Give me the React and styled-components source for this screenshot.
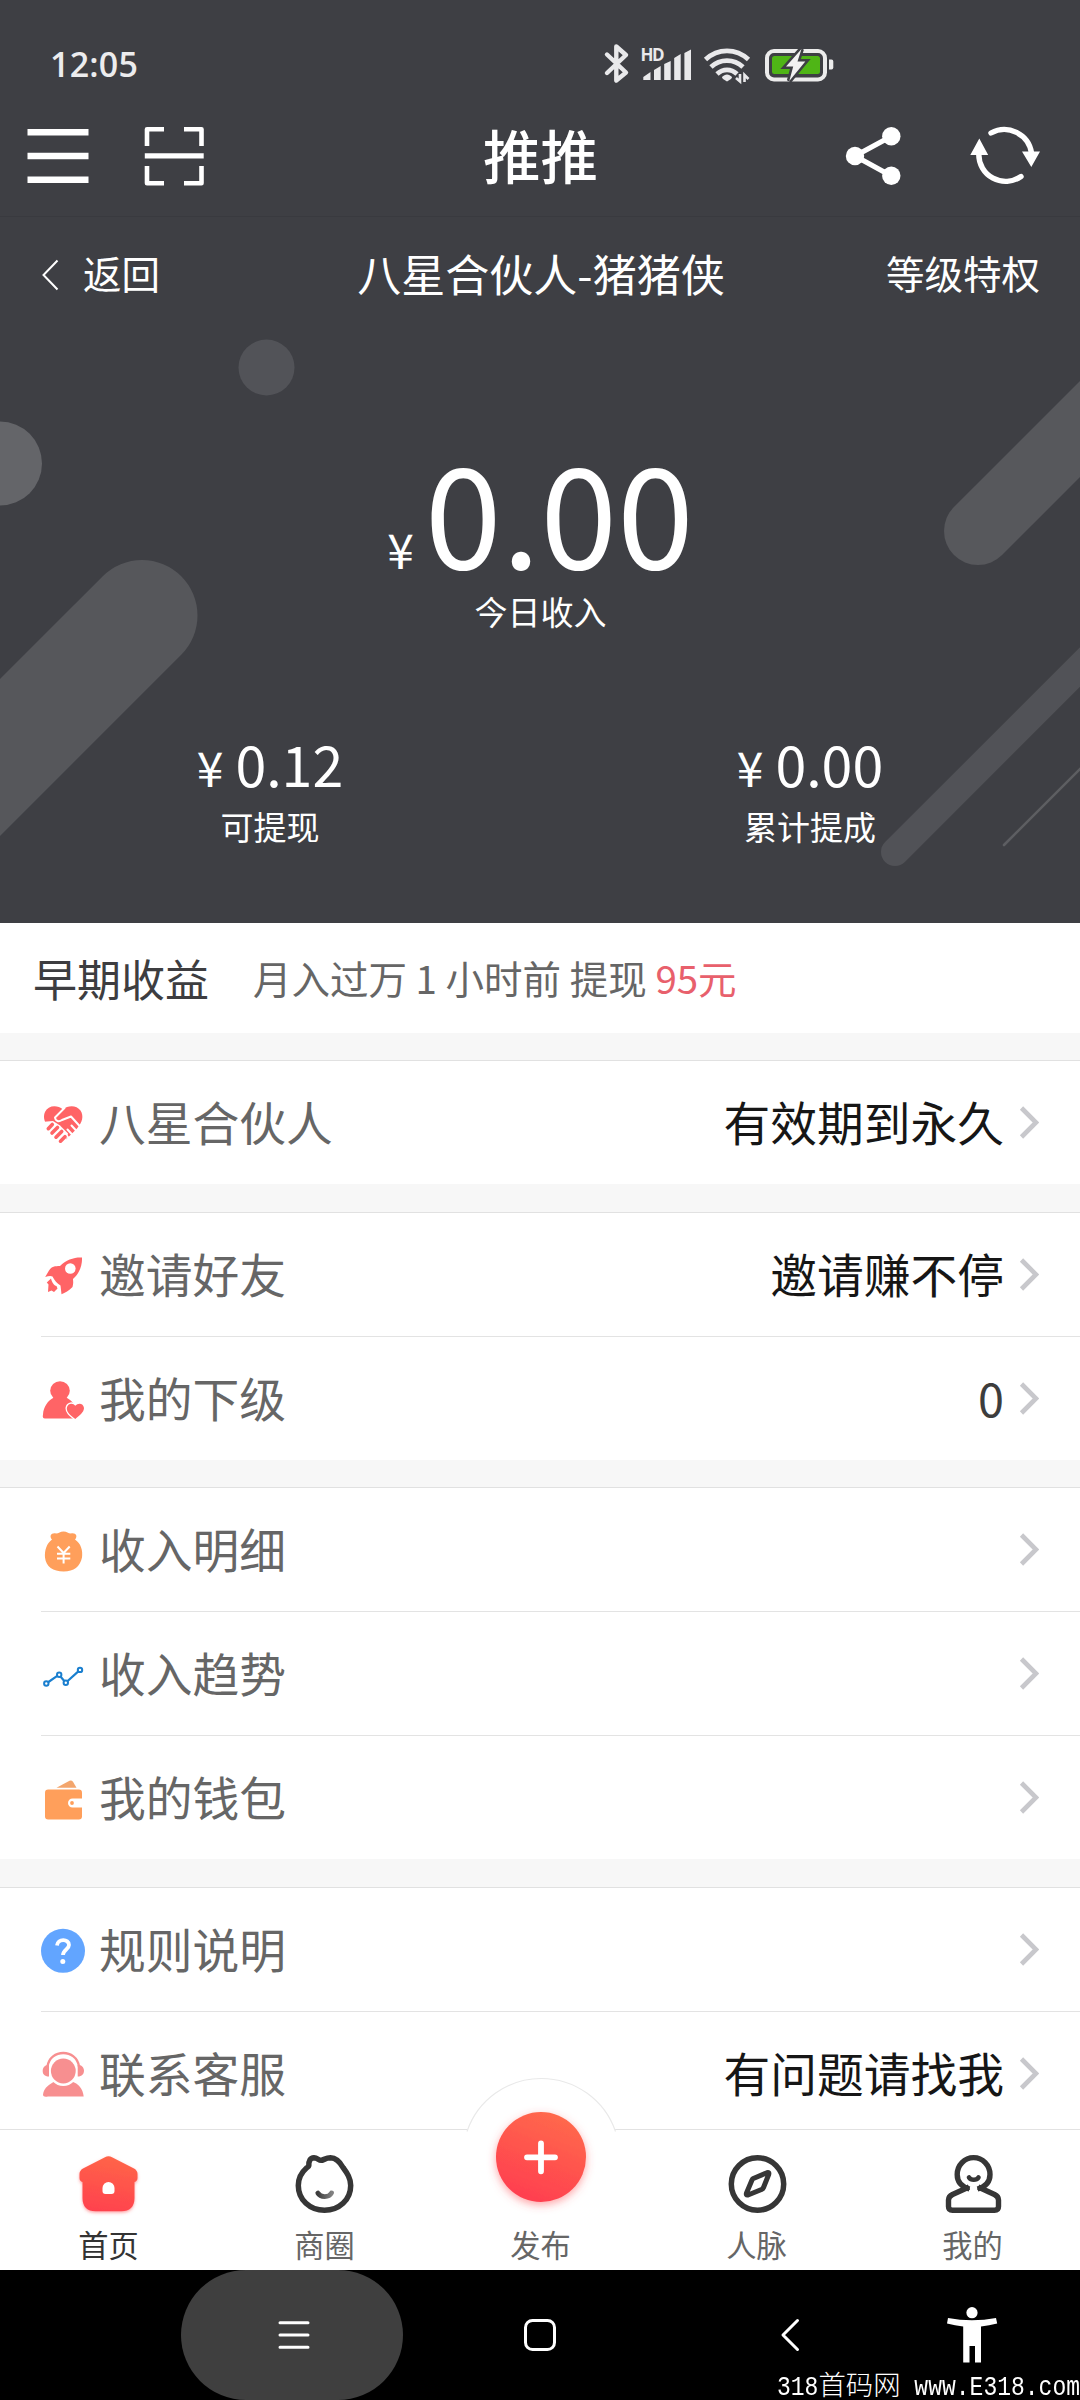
import React from "react";
import styled, { createGlobalStyle } from "styled-components";

const GlobalStyle = createGlobalStyle`
  * { box-sizing: border-box; }
  html, body { margin: 0; padding: 0; background: #fff; }
  body { font-family: "Noto Sans CJK SC", "Noto Sans", sans-serif; }
`;

const Screen = styled.div`
  width: 1080px;
  height: 2400px;
  display: flex;
  flex-direction: column;
  overflow: hidden;
  background: #f7f7f7;
`;

/* ---------- dark top area ---------- */

const Hero = styled.header`
  position: relative;
  height: 923px;
  flex: none;
  display: flex;
  flex-direction: column;
  background: #3e3f44;
  color: #fff;
`;

const HeroShapes = styled.svg`
  position: absolute;
  inset: 0;
  width: 1080px;
  height: 923px;
`;

const StatusBar = styled.div`
  position: relative;
  height: 96px;
  display: flex;
  align-items: flex-start;
  padding: 40px 0 0 50px;
`;

const Clock = styled.span`
  width: 550px;
  font: 600 34px/48px "Open Sans", sans-serif;
  letter-spacing: 0.2px;
  color: #ececee;
`;

const Glyph = styled.svg`
  display: block;
  flex: none;
`;

const AppBar = styled.div`
  position: relative;
  height: 121px;
  display: grid;
  grid-template-columns: 1fr auto 1fr;
  align-items: center;
  padding: 0 34px 0 22px;
  border-bottom: 1px solid #393a3f;
`;

const BarActions = styled.div`
  display: flex;
  justify-content: ${(p) => (p.$end ? "flex-end" : "flex-start")};
  gap: ${(p) => p.$gap}px;
`;

const AppTitle = styled.h1`
  margin: 0 0 4px 13px;
  font-size: 57.5px;
  line-height: 80px;
  font-weight: 500;
`;

const SubBar = styled.div`
  position: relative;
  height: 116px;
  display: grid;
  grid-template-columns: 1fr auto 1fr;
  align-items: center;
  padding: 0 40px 6px 38px;
`;

const BackLink = styled.div`
  display: flex;
  align-items: center;
  gap: 19px;
  font-size: 38.5px;
  line-height: 56px;
  & > svg { margin-top: 5px; }
`;

const SubTitle = styled.h2`
  margin: 1px 0 0 4px;
  font-size: 44px;
  line-height: 64px;
  font-weight: 400;
`;

const Privilege = styled.div`
  text-align: right;
  font-size: 38.5px;
  line-height: 56px;
`;

const MainIncome = styled.div`
  position: relative;
  margin-top: 107px;
  padding-left: 1px;
  display: flex;
  flex-direction: column;
  align-items: center;
`;

const Amount = styled.div`
  display: flex;
  align-items: baseline;
  gap: ${(p) => (p.$large ? 11 : 12)}px;
  font-size: ${(p) => (p.$large ? 138.5 : 55.5)}px;
  line-height: ${(p) => (p.$large ? 138 : 60)}px;
`;

const Currency = styled.span`
  font-size: 48px;
  line-height: 48px;
`;

const Caption = styled.div`
  margin-top: 9px;
  font-size: 33px;
  line-height: 48px;
`;

const Balances = styled.div`
  position: relative;
  margin-top: 98px;
  display: grid;
  grid-template-columns: 1fr 1fr;
`;

const Balance = styled.div`
  display: flex;
  flex-direction: column;
  align-items: center;
`;

/* ---------- list ---------- */

const Content = styled.main`
  height: 1206px;
  flex: none;
  overflow: hidden;
`;

const Notice = styled.section`
  height: 110px;
  display: flex;
  align-items: center;
  gap: 44px;
  padding: 0 33px 1px;
  background: #fff;
`;

const NoticeTitle = styled.strong`
  font-size: 44px;
  line-height: 64px;
  font-weight: 400;
  color: #3d3d40;
`;

const NoticeText = styled.span`
  font-size: 38.5px;
  line-height: 56px;
  margin-bottom: 2px;
  color: #666;
`;

const Highlight = styled.em`
  font-style: normal;
  color: #e8606c;
`;

const Group = styled.section`
  margin-top: ${(p) => p.$gap}px;
  border-top: 1px solid #e1e1e1;
  background: #fff;
`;

const Row = styled.div`
  height: 123px;
  display: flex;
  align-items: center;
  padding: 0 41px 0 41px;
  & + & {
    height: 124px;
    background: linear-gradient(#e3e3e3, #e3e3e3) no-repeat 41px 0 / 100% 1px;
    padding-top: 1px;
  }
`;

const RowLabel = styled.span`
  flex: 1;
  margin: 0 0 4px 14px;
  font-size: 46.75px;
  line-height: 66px;
  color: #666;
`;

const RowValue = styled.span`
  font-size: 46.75px;
  line-height: 66px;
  margin: 0 14px 4px 0;
  color: ${(p) => (p.$soft ? "#3d3d3d" : "#161616")};
`;

/* ---------- tab bar ---------- */

const TabBar = styled.nav`
  position: relative;
  height: 141px;
  flex: none;
  display: grid;
  grid-template-columns: repeat(5, 1fr);
  border-top: 1px solid #e2e2e2;
  background: #fff;
`;

const Bump = styled.svg`
  position: absolute;
  left: 455px;
  top: -57px;
`;

const Tab = styled.div`
  position: relative;
  display: flex;
  flex-direction: column;
  align-items: center;
  padding: 20px 0 0 1px;
  color: ${(p) => (p.$active ? "#333" : "#666")};
`;

const TabLabel = styled.span`
  margin-top: 4px;
  font-size: 30.25px;
  line-height: 40px;
`;

const TabSpacer = styled.div`
  height: 70px;
`;

/* ---------- system navigation ---------- */

const SystemNav = styled.footer`
  position: relative;
  height: 130px;
  flex: none;
  display: flex;
  padding-left: 181px;
  background: #000;
`;

const NavKey = styled.div`
  width: ${(p) => p.$w}px;
  height: 130px;
  display: flex;
  align-items: center;
  justify-content: center;
  padding-bottom: ${(p) => (p.$lift ? 1 : 0)}px;
  border-radius: 65px;
  background: ${(p) => (p.$pressed ? "#3f3f3f" : "transparent")};
`;

const Watermark = styled.div`
  position: absolute;
  right: 0;
  bottom: -1px;
  display: flex;
  align-items: baseline;
  white-space: pre;
  color: #fff;
`;

const WatermarkLatin = styled.span`
  font: 400 23px/24px "Liberation Mono", monospace;
  transform: scaleY(1.18);
  transform-origin: 0 18px;
`;

const WatermarkName = styled.span`
  font: 300 27.4px/24px "Noto Sans CJK SC", sans-serif;
`;

/* Draws an icon whose viewBox starts at (x, y). */
const Icon = ({ x, y, w, h, children, ...rest }) => (
  <Glyph width={w} height={h} viewBox={`${x} ${y} ${w} ${h}`} fill="none" {...rest}>
    {children}
  </Glyph>
);

const Shapes = () => (
  <HeroShapes viewBox="0 0 1080 923" fill="none">
    <circle cx="266.5" cy="367.5" r="28" fill="#525358" />
    <circle cx="0" cy="463.5" r="42" fill="#646569" />
    <path d="M142 615.5L-60 817.5" stroke="#56575b" strokeWidth="111" strokeLinecap="round" />
    <path d="M978 531L1140 369" stroke="#57585c" strokeWidth="68" strokeLinecap="round" />
    <path d="M895 852L1120 627" stroke="#515257" strokeWidth="28" strokeLinecap="round" />
    <path d="M1004 845L1090 759" stroke="#5d5e62" strokeWidth="2.6" strokeLinecap="round" />
  </HeroShapes>
);

const StatusIcons = () => (
  <Icon x={600} y={40} w={240} h={48}>
    <path
      d="M607 54.500L626 72.500L616.300 80.500V46.500L626 55L607 73"
      stroke="#e9e9eb"
      strokeWidth="4.400"
      strokeLinejoin="round"
      strokeLinecap="round"
    />
    <text x="640.500" y="60.500" fontFamily="Open Sans, sans-serif" fontWeight="700" fontSize="17" fill="#e9e9eb" textLength="24">
      HD
    </text>
    <g fill="#e9e9eb">
      <path d="M643.300 80V77L650.500 72V80ZM654 80V70L660.700 66V80ZM664.200 80V64L670.700 61V80ZM674.200 80V58L680.700 54V80ZM684.400 80V53L691 49.500V80Z" />
    </g>
    <g stroke="#e9e9eb" strokeWidth="4.800" fill="none">
      <path d="M705.500 59.500C718 48 736 48 748.500 59.500" />
      <path d="M711 67C720 58.500 734 58.500 743 67" />
      <path d="M717 74C723 68.500 731 68.500 737 74" />
    </g>
    <path d="M722 77C725 73.500 729 73.500 732 77Q732.500 78.500 727 81.500Q721.500 78.500 722 77Z" fill="#e9e9eb" />
    <path d="M740 74V81.500L736 78M744.500 82V75L748.500 79" stroke="#e9e9eb" strokeWidth="2.600" />
    <rect x="767" y="51" width="58" height="28.500" rx="7" stroke="#ececec" strokeWidth="4" />
    <rect x="772" y="56" width="48" height="18" rx="2.500" fill="#4fb516" />
    <path d="M829 59.500h2.500q1.800 0 1.800 2v6q0 2-1.800 2h-2.500Z" fill="#ececec" />
    <path d="M795 57.500L780.500 69H792ZM802 59H810.500L797 73Z" fill="#3e3f44" />
    <path
      d="M801.500 49L786 66.500H793.200L789.300 81L805.300 61.500H797.500Z"
      fill="#f2f2f2"
      stroke="#3e3f44"
      strokeWidth="5"
      paintOrder="stroke"
    />
  </Icon>
);

const MenuIcon = () => (
  <Icon x={22} y={122} w={72} h={68}>
    <path d="M27.500 132.300H88.500M27.500 156H88.500M27.500 179.700H88.500" stroke="#fff" strokeWidth="6.400" />
  </Icon>
);

const ScanIcon = () => (
  <Icon x={140} y={122} w={68} h={68}>
    <g stroke="#fff" strokeWidth="4.600" strokeLinejoin="round">
      <path d="M164 129.300H147V146M184 129.300H201.500V146M147 166V183.200H164M201.500 166V183.200H184" />
      <path d="M144.800 155.900H203.700" strokeWidth="5.400" />
    </g>
  </Icon>
);

const ShareIcon = () => (
  <Icon x={840} y={122} w={66} h={68}>
    <path d="M891 136.500L855 156L891 175.800" stroke="#fff" strokeWidth="5.200" />
    <g fill="#fff">
      <circle cx="855" cy="156" r="9.200" />
      <circle cx="891.300" cy="136.300" r="9.200" />
      <circle cx="891.300" cy="175.800" r="9.200" />
    </g>
  </Icon>
);

const RefreshIcon = () => (
  <Icon x={964} y={122} w={82} h={68}>
    <g stroke="#fff" strokeWidth="5.400" strokeLinecap="round">
      <path d="M991 133A27.500 27.500 0 0 1 1031.500 153" />
      <path d="M978.800 154A26.800 26.800 0 0 0 1021 176.500" />
    </g>
    <path d="M1022 151.500H1040L1031.300 167ZM970.300 155H988.200L979.300 138.500Z" fill="#fff" />
  </Icon>
);

const BackIcon = () => (
  <Icon x={38} y={256} w={26} h={40}>
    <path d="M57.500 261.500L43.500 276L57.500 290.500" stroke="#fff" strokeWidth="2" />
  </Icon>
);

const Chevron = () => (
  <Icon x={1018} y={1102.5} w={21} h={40}>
    <path d="M1021.500 1107.500L1036 1122L1021.500 1136.500" stroke="#c8c8cc" strokeWidth="4.600" />
  </Icon>
);

const RED = "#ff6466";
const ORANGE = "#ff9f5b";

const PartnerIcon = () => (
  <Icon x={41} y={1100.5} w={44} h={44}>
    <path
      d="M63 1109C57 1104 48 1105 45 1111.500C42.500 1117 45 1123 49 1127L63 1142L77 1128C82.500 1121.500 84 1115.500 80.500 1110C76.500 1104.500 68 1104.500 63 1109Z"
      fill={RED}
    />
    <path d="M42 1121.500L47 1121L53 1120.500L60 1125L68 1133L65 1144H57L42 1130Z" fill="#fff" />
    <g stroke="#fff" strokeWidth="2" strokeLinejoin="round" strokeLinecap="round">
      <path d="M64.500 1107.500L55 1117C55.500 1121 59 1121.500 62 1119.500L71 1116L80.500 1126.500" />
      <path d="M71.500 1125L77.500 1131.500M67.500 1129L73.500 1135.500M66 1134L69 1138" />
    </g>
    <path
      d="M48.300 1128.200L52.300 1124M52 1132.500L57.500 1127M56 1136.700L61.700 1131M60.500 1140.700L65 1136.200"
      stroke={RED}
      strokeWidth="3.600"
      strokeLinecap="round"
    />
  </Icon>
);

const RocketIcon = () => (
  <Icon x={41} y={1252.5} w={44} h={44}>
    <path
      d="M82 1257C75 1256.500 66 1259 60 1265.500C55 1265.500 51.500 1266 49 1270L45.200 1276.500C48 1275.500 51 1275 52.500 1276C54.500 1280 57 1283 60.500 1285L61.500 1293.800C65 1292 69 1290.500 72.500 1286.500C73.500 1283 73.200 1281 73 1278.500C79 1273.500 82.500 1265 82 1257Z"
      fill={RED}
    />
    <circle cx="70.300" cy="1268" r="5.300" fill="#fff" />
    <path d="M51 1278L46.800 1282L48.500 1284L48 1291.500L51.500 1290L54 1291.500L57.500 1288L56.500 1285.500C54 1285 52 1282 51 1278Z" fill={RED} />
  </Icon>
);

const TeamIcon = () => (
  <Icon x={41} y={1376.5} w={44} h={44}>
    <ellipse cx="60" cy="1390.300" rx="9.800" ry="9.500" fill={RED} />
    <path d="M54 1397H66C70 1399 74 1402 76 1408L75 1418H45Q42 1418 43 1414C43.500 1406 48 1400 54 1397Z" fill={RED} />
    <path
      d="M75.300 1418.500C71 1415 66.500 1412 66.800 1407.500C67.500 1402.500 73 1402 75.300 1405.200C78 1402 83.500 1402.500 84 1407.500C84 1412 79 1415 75.300 1418.500Z"
      fill={RED}
      stroke="#fff"
      strokeWidth="2.600"
      paintOrder="stroke"
    />
  </Icon>
);

const BagIcon = () => (
  <Icon x={41} y={1527.5} w={44} h={46}>
    <path
      d="M52 1540C49 1537 51 1533 56 1534C59 1534 60 1532 63.500 1532C67 1532 68 1534 71 1534C76 1533 78 1537 75 1540C81 1544 83 1551 82 1558C80 1567 74 1572 63.700 1572C53 1572 46 1567 45 1558C44.500 1551 46.500 1544 52 1540Z"
      fill={ORANGE}
    />
    <path d="M57.500 1547L63.600 1553.500L69.700 1547M57 1554.300H70.300M57 1559H70.300M63.600 1553V1564" stroke="#fff" strokeWidth="2" />
  </Icon>
);

const TrendIcon = () => (
  <Icon x={41} y={1651.5} w={44} h={44}>
    <path d="M46.300 1683L59 1674.200L65.700 1682.200L80 1669.400" stroke="#1a7fcf" strokeWidth="2.200" />
    <g fill="#fff" stroke="#1a7fcf" strokeWidth="2">
      <circle cx="46.300" cy="1683" r="2.200" />
      <circle cx="59.200" cy="1674.200" r="2.200" />
      <circle cx="65.800" cy="1682.200" r="2.200" />
      <circle cx="80" cy="1669.400" r="2.200" />
    </g>
  </Icon>
);

const WalletIcon = () => (
  <Icon x={41} y={1775.5} w={44} h={44}>
    <path d="M56.500 1787.200L69.500 1780.300Q71.500 1779.500 73 1781.200L76.500 1787.200Z" fill="#f3a56c" />
    <rect x="45" y="1789" width="37" height="30" rx="3.200" fill={ORANGE} />
    <path d="M82.500 1798H72.500A4.500 4.500 0 0 0 72.500 1807H82.500Z" fill="#fff" />
    <circle cx="72" cy="1802.500" r="1.900" fill={ORANGE} />
  </Icon>
);

const HelpIcon = () => (
  <Icon x={41} y={1926.5} w={44} h={46}>
    <circle cx="63" cy="1950.300" r="22" fill="#62a5ff" />
    <path d="M57 1945C57.500 1938 69 1938 69 1944.500C69 1949 63 1949 63 1954.500" stroke="#fff" strokeWidth="3.800" />
    <circle cx="62.800" cy="1961" r="2.500" fill="#fff" />
  </Icon>
);

const ServiceIcon = () => (
  <Icon x={41} y={2050.5} w={44} h={46}>
    <path d="M48 2096Q43 2097 43 2094C44 2087 50 2083 55 2081H72C78 2083 83 2088 83.700 2096Z" fill="#f78f90" />
    <circle cx="63.300" cy="2071" r="14.500" fill="#fff" />
    <circle cx="63.300" cy="2070.500" r="12.400" fill="#f78f90" />
    <path d="M47.500 2066C50 2048 76.500 2048 79 2066" stroke="#f78f90" strokeWidth="2.400" />
    <path d="M49 2064.500V2076C44.500 2076 42.500 2073.500 42.700 2070C43 2066.500 45 2064.500 49 2064.500ZM77.700 2064.500V2076C82 2076 84 2073.500 84 2070C83.700 2066.500 81.700 2064.500 77.700 2064.500Z" fill="#f78f90" />
  </Icon>
);

const HomeTabIcon = () => (
  <Icon x={73.5} y={2150} w={70} h={70}>
    <defs>
      <linearGradient id="home" x1="0.6" y1="0" x2="0.4" y2="1">
        <stop offset="0" stopColor="#ff6549" />
        <stop offset="1" stopColor="#ff424e" />
      </linearGradient>
      <filter id="homeGlow" x="-20%" y="-20%" width="140%" height="140%">
        <feDropShadow dx="0" dy="1.500" stdDeviation="1.600" floodColor="#ff4a50" floodOpacity="0.5" />
      </filter>
    </defs>
    <path
      filter="url(#homeGlow)"
      d="M104.500 2157.200Q108 2155.500 111.500 2157.200L133.500 2168.500Q137 2170.500 137 2174V2178Q137 2181 134 2182V2198C134 2207 129 2211.300 121 2211.300H95C87 2211.300 82 2207 82 2198V2182Q79 2181 79 2178V2174Q79 2170.500 82.500 2168.500Z"
      fill="url(#home)"
    />
    <path d="M102 2188A6 6 0 0 1 114 2188V2191Q114 2194 111 2194H105Q102 2194 102 2191Z" fill="#fff" />
  </Icon>
);

const CircleTabIcon = () => (
  <Icon x={289.5} y={2150} w={70} h={70}>
    <defs>
      <linearGradient id="smile" x1="0" y1="0" x2="1" y2="0">
        <stop offset="0" stopColor="#3c3c3c" />
        <stop offset="1" stopColor="#808080" />
      </linearGradient>
    </defs>
    <path
      d="M308.300 2166C308 2160.500 309.800 2158 313.500 2157.800C317 2157.800 318 2160.300 320.500 2160.300C323 2160.300 325 2157.800 330 2157.800C336.500 2158 340 2163 342.500 2167.500C346.500 2173 350.200 2178 350.200 2185.500C350.200 2200 338.500 2210.300 324 2210.300C309.500 2210.300 297.800 2200 297.800 2185.500C297.800 2177 302 2171.500 306 2168Q308.300 2166.500 308.300 2166Z"
      stroke="#363636"
      strokeWidth="5.500"
    />
    <path d="M317.300 2193C320 2197.800 328.500 2197.800 331 2193" stroke="url(#smile)" strokeWidth="4.800" strokeLinecap="round" />
  </Icon>
);

const CompassTabIcon = () => (
  <Icon x={721.5} y={2150} w={70} h={70}>
    <circle cx="757" cy="2184" r="26.200" stroke="#363636" strokeWidth="5.500" />
    <path
      d="M752.800 2178.500L766.500 2172.700Q769 2172 768.200 2174.500L763 2187.500Q762.500 2188.800 761 2189.500L747.500 2195Q745.200 2195.500 746 2193L751.500 2180Q752 2178.900 752.800 2178.500Z"
      stroke="#363636"
      strokeWidth="5"
      strokeLinejoin="round"
    />
  </Icon>
);

const MineTabIcon = () => (
  <Icon x={937.5} y={2150} w={70} h={70}>
    <g stroke="#363636" strokeWidth="5.400" strokeLinecap="round" strokeLinejoin="round">
      <path
        strokeLinecap="butt"
        d="M969 2189C960 2186.500 956.700 2181 956.700 2174.500A16.400 16.900 0 0 1 989.500 2174.500C989.500 2181 986 2186.500 977 2189"
      />
      <path
        strokeLinecap="butt"
        d="M968.500 2187L952 2194.500Q948 2196.500 948 2200V2206.500Q948 2210.300 952 2210.300H994Q998 2210.300 998 2206.500V2200Q998 2196.500 994 2194.500L977.700 2187"
      />
      <path d="M968.500 2177.500C970.500 2180.500 976 2180.500 978 2177.500" strokeWidth="4.600" />
    </g>
  </Icon>
);

const PublishBump = () => (
  <Bump width="170" height="160" viewBox="455 2073 170 160" fill="none">
    <defs>
      <linearGradient id="publish" x1="0.7" y1="0" x2="0.3" y2="1">
        <stop offset="0" stopColor="#ff6a4c" />
        <stop offset="1" stopColor="#ff3d50" />
      </linearGradient>
      <filter id="publishGlow" x="-30%" y="-30%" width="160%" height="160%">
        <feDropShadow dx="0" dy="3" stdDeviation="4" floodColor="#ff4a50" floodOpacity="0.5" />
      </filter>
    </defs>
    <path d="M467 2131.500A78.500 78.500 0 0 1 615.500 2131.500Z" fill="#fff" />
    <path d="M467 2131.500A78.500 78.500 0 0 1 615.500 2131.500" stroke="#e9e9e9" strokeWidth="1.200" />
    <circle cx="541" cy="2157" r="45" fill="url(#publish)" filter="url(#publishGlow)" />
    <path d="M527 2157.300H555M541 2143.300V2171.300" stroke="#fff" strokeWidth="5.800" strokeLinecap="round" />
  </Bump>
);

const groups = [
  { gap: 27, rows: [{ icon: PartnerIcon, label: "八星合伙人", value: "有效期到永久" }] },
  {
    gap: 28,
    rows: [
      { icon: RocketIcon, label: "邀请好友", value: "邀请赚不停" },
      { icon: TeamIcon, label: "我的下级", value: "0", soft: true },
    ],
  },
  {
    gap: 27,
    rows: [
      { icon: BagIcon, label: "收入明细" },
      { icon: TrendIcon, label: "收入趋势" },
      { icon: WalletIcon, label: "我的钱包" },
    ],
  },
  {
    gap: 28,
    rows: [
      { icon: HelpIcon, label: "规则说明" },
      { icon: ServiceIcon, label: "联系客服", value: "有问题请找我" },
    ],
  },
];

const tabs = [
  { icon: HomeTabIcon, label: "首页", active: true },
  { icon: CircleTabIcon, label: "商圈" },
  { icon: TabSpacer, label: "发布" },
  { icon: CompassTabIcon, label: "人脉" },
  { icon: MineTabIcon, label: "我的" },
];

export default function App() {
  return (
    <>
      <GlobalStyle />
      <Screen>
        <Hero>
          <Shapes />
          <StatusBar>
            <Clock>12:05</Clock>
            <StatusIcons />
          </StatusBar>
          <AppBar>
            <BarActions $gap={46}>
              <MenuIcon />
              <ScanIcon />
            </BarActions>
            <AppTitle>推推</AppTitle>
            <BarActions $gap={58} $end>
              <ShareIcon />
              <RefreshIcon />
            </BarActions>
          </AppBar>
          <SubBar>
            <BackLink>
              <BackIcon />
              返回
            </BackLink>
            <SubTitle>八星合伙人-猪猪侠</SubTitle>
            <Privilege>等级特权</Privilege>
          </SubBar>
          <MainIncome>
            <Amount $large>
              <Currency>¥</Currency>
              <span>0.00</span>
            </Amount>
            <Caption>今日收入</Caption>
          </MainIncome>
          <Balances>
            <Balance>
              <Amount>
                <Currency>¥</Currency>
                <span>0.12</span>
              </Amount>
              <Caption>可提现</Caption>
            </Balance>
            <Balance>
              <Amount>
                <Currency>¥</Currency>
                <span>0.00</span>
              </Amount>
              <Caption>累计提成</Caption>
            </Balance>
          </Balances>
        </Hero>
        <Content>
          <Notice>
            <NoticeTitle>早期收益</NoticeTitle>
            <NoticeText>
              月入过万 1 小时前 提现 <Highlight>95元</Highlight>
            </NoticeText>
          </Notice>
          {groups.map((group, i) => (
            <Group key={i} $gap={group.gap}>
              {group.rows.map(({ icon: RowIcon, label, value, soft }) => (
                <Row key={label}>
                  <RowIcon />
                  <RowLabel>{label}</RowLabel>
                  {value && <RowValue $soft={soft}>{value}</RowValue>}
                  <Chevron />
                </Row>
              ))}
            </Group>
          ))}
        </Content>
        <TabBar>
          <PublishBump />
          {tabs.map(({ icon: TabIcon, label, active }) => (
            <Tab key={label} $active={active}>
              <TabIcon />
              <TabLabel>{label}</TabLabel>
            </Tab>
          ))}
        </TabBar>
        <SystemNav>
          <NavKey $w={222} $pressed>
            <Icon x={274} y={2317} w={36} h={36}>
              <path d="M280 2322.700H308M280 2335H308M280 2347.300H308" stroke="#fff" strokeWidth="3" strokeLinecap="round" />
            </Icon>
          </NavKey>
          <NavKey $w={274}>
            <Icon x={522} y={2317} w={36} h={36}>
              <rect x="525.500" y="2320.500" width="29" height="29" rx="7" stroke="#fff" strokeWidth="3" />
            </Icon>
          </NavKey>
          <NavKey $w={226}>
            <Icon x={772} y={2317} w={36} h={36}>
              <path d="M797.500 2320.500L783 2335L797.500 2349.500" stroke="#fff" strokeWidth="3" strokeLinecap="round" strokeLinejoin="round" />
            </Icon>
          </NavKey>
          <NavKey $w={138} $lift>
            <Icon x={944} y={2305} w={56} h={60}>
              <circle cx="972" cy="2312.700" r="5.600" fill="#fff" />
              <path
                d="M948 2318Q972 2322.500 996 2318L997.200 2323.500Q989 2325.500 981 2326.500V2362.500H975V2346H969.500V2362.500H963.200V2326.500Q955 2325.500 947 2323.500Z"
                fill="#fff"
              />
            </Icon>
          </NavKey>
          <Watermark>
            <WatermarkLatin>318</WatermarkLatin>
            <WatermarkName>首码网</WatermarkName>
            <WatermarkLatin> www.E318.com</WatermarkLatin>
          </Watermark>
        </SystemNav>
      </Screen>
    </>
  );
}
